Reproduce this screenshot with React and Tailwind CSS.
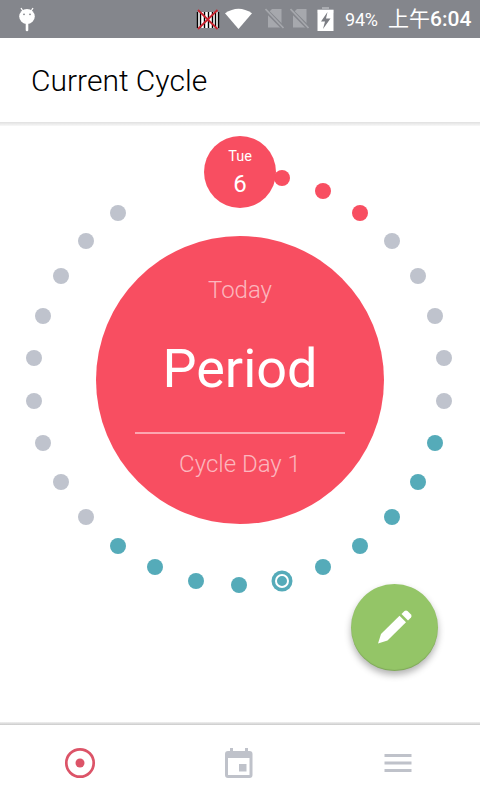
const RADIUS = 206;
const CYCLE_LENGTH = 30;

const COLORS = {
  period: '#f84e61',
  fertile: '#55abb9',
  none: '#bfc3cd',
};

// days 1-27 are visible, the selected day takes the top slot
const days = Array.from({ length: 27 }, (_, i) => {
  const day = i + 1;
  const angle = (day / CYCLE_LENGTH) * Math.PI * 2;
  let type = 'none';
  if (day <= 3) type = 'period';
  if (day >= 9 && day <= 18) type = 'fertile';
  return {
    day,
    type,
    ovulation: day === 14,
    x: Math.floor(239.7 + RADIUS * Math.sin(angle)),
    y: Math.floor(253.7 - RADIUS * Math.cos(angle)),
  };
});

function SimIcon() {
  return (
    <svg width="20" height="22" viewBox="0 0 20 22">
      <path d="M7 1h9.500v18.500H3V5z" fill="#a6a8ad" />
      <path d="M0 1.500L18.500 20" stroke="#84868c" strokeWidth="4" />
      <path d="M0.500 1L18.500 20" stroke="#a6a8ad" strokeWidth="1.700" />
    </svg>
  );
}

function StatusBar() {
  return (
    <div className="flex h-[38px] shrink-0 items-center bg-[#84868c] pl-[18px] text-white">
      <svg width="18" height="26" viewBox="0 0 18 26" className="mb-px">
        <path d="M3 2l2.500 4M15 2l-2.500 4" stroke="#fff" strokeWidth="1.300" />
        <ellipse cx="9" cy="10.500" rx="7.800" ry="7.500" fill="#fff" />
        <path d="M9 17v7" stroke="#fff" strokeWidth="2.600" strokeLinecap="round" />
        <circle cx="6" cy="8.300" r="0.900" fill="#84868c" />
        <circle cx="12" cy="8.300" r="0.900" fill="#84868c" />
      </svg>
      <svg width="24" height="22" viewBox="0 0 24 22" className="mt-[2px] ml-[160px]">
        <path d="M1 3h22v16H1z" fill="#fff" />
        <path
          d="M1.500 3v16M4.500 3v16M8.500 3v16M12.500 3v16M16.500 3v16M19.500 3v16M22.500 3v16"
          stroke="#000"
          strokeWidth="1.400"
        />
        <path d="M2 1l19.500 19M21.500 1L2 20" stroke="#c8232f" strokeWidth="1.800" />
      </svg>
      <svg width="27" height="22" viewBox="0 0 27 22" className="ml-[5px]">
        <path d="M0 5.200Q13.500 -3.800 27 5.200L13.500 21z" fill="#fff" />
      </svg>
      <div className="ml-[13px] flex gap-[5px]">
        <SimIcon />
        <SimIcon />
      </div>
      <svg width="17" height="24" viewBox="0 0 17 24" className="ml-[7px]">
        <path d="M5 0h7v2h4.500v4h-16V2H5z" fill="#a9abb0" />
        <path d="M0.500 3h16v21h-16z" fill="#fff" />
        <path d="M10.500 5L4 14.500h4L6 22l7.500-10.500H9z" fill="#7b7d83" />
      </svg>
      <span className="ml-[11px] w-[34px] pt-px text-[18px] leading-none tracking-[-0.200px]">94%</span>
      <span className="ml-[9px] text-[21px] font-medium leading-none whitespace-nowrap">
        <span className="font-normal">上午</span>6:04
      </span>
    </div>
  );
}

function CycleRing() {
  return (
    <svg width="480" height="480" viewBox="0 0 480 480" className="absolute top-0 left-0">
      {days.map((d) =>
        d.ovulation ? (
          <g key={d.day}>
            <circle cx={d.x} cy={d.y} r="10.500" fill={COLORS.fertile} />
            <circle cx={d.x} cy={d.y} r="6" fill={COLORS.fertile} stroke="#fff" strokeWidth="2" />
          </g>
        ) : (
          <circle key={d.day} cx={d.x} cy={d.y} r="8" fill={COLORS[d.type]} />
        )
      )}
    </svg>
  );
}

export default function App() {
  return (
    <div className="flex h-[800px] w-[480px] flex-col overflow-hidden bg-white font-['Roboto','Noto_Sans_CJK_TC',sans-serif]">
      <StatusBar />
      <header className="flex h-[84px] shrink-0 items-center pl-[31px]">
        <h1 className="pt-px text-[30px] font-light leading-none text-black">Current Cycle</h1>
      </header>
      <div className="h-1 shrink-0 bg-linear-to-b from-[#e0e0e0] to-[#f8f8f8]" />

      <main className="relative flex flex-1 flex-col items-center pt-[10px]">
        <CycleRing />
        <div className="relative flex size-[72px] flex-col items-center rounded-full bg-[#f84e61] pt-[13px] text-white">
          <span className="text-[14.500px] leading-4">Tue</span>
          <span className="mt-[5px] text-[24px] leading-7">6</span>
        </div>
        <div className="relative mt-7 flex size-72 shrink-0 flex-col items-center rounded-full bg-[#f84e61] text-white">
          <span className="mt-[38px] text-[24px] font-light leading-8 text-white/60">Today</span>
          <span className="mt-[31px] text-[54px] leading-[64px]">Period</span>
          <div className="mt-[31px] h-0.5 w-[210px] bg-[#fca6b0]" />
          <span className="mt-[14px] text-[24px] font-light leading-8 text-white/60">Cycle Day 1</span>
        </div>
        <button className="absolute top-[458px] left-[351px] flex size-[87px] items-center justify-center rounded-full bg-[#94c567] shadow-[0_4px_7px_rgba(0,0,0,0.3),inset_0_-1px_1px_rgba(0,0,0,0.15)]">
          <svg width="36" height="36" viewBox="0 0 36 36" fill="#fff" className="mb-[2px]">
            <path d="M1 34.500L4 25L22.500 6.800L29 13.300L10.500 31.500z" />
            <path d="M24.500 5L27.500 2Q29 0.800 30.500 2L34 5.500Q35.200 7 34 8.500L31 11.500z" />
          </svg>
        </button>
      </main>

      <div className="h-[3px] shrink-0 bg-linear-to-b from-[#f0f0f0] to-[#cacaca]" />
      <nav className="flex h-[75px] shrink-0 items-center pl-16">
        <button>
          <svg width="32" height="32" viewBox="0 0 32 32" fill="none">
            <circle cx="16" cy="16" r="13.700" stroke="#dc5468" strokeWidth="2.700" />
            <circle cx="16" cy="16" r="4.500" fill="#dc5468" />
          </svg>
        </button>
        <button className="ml-32">
          <svg width="30" height="32" viewBox="0 0 30 32" fill="#bfc2ca">
            <path d="M6 1h3v4H6zM21 1h3v4h-3z" />
            <path
              fillRule="evenodd"
              d="M4 4h21.500a3 3 0 0 1 3 3v21a3 3 0 0 1-3 3H4a3 3 0 0 1-3-3V7a3 3 0 0 1 3-3zM4 11v17h21.500V11z"
            />
            <path d="M15 17h7.500v7.500H15z" />
          </svg>
        </button>
        <button className="ml-[130px]">
          <svg width="28" height="20" viewBox="0 0 28 20" fill="#bfc2ca">
            <path d="M0.500 1h27v3h-27zM0.500 8.500h27v3h-27zM0.500 16h27v3h-27z" />
          </svg>
        </button>
      </nav>
    </div>
  );
}
